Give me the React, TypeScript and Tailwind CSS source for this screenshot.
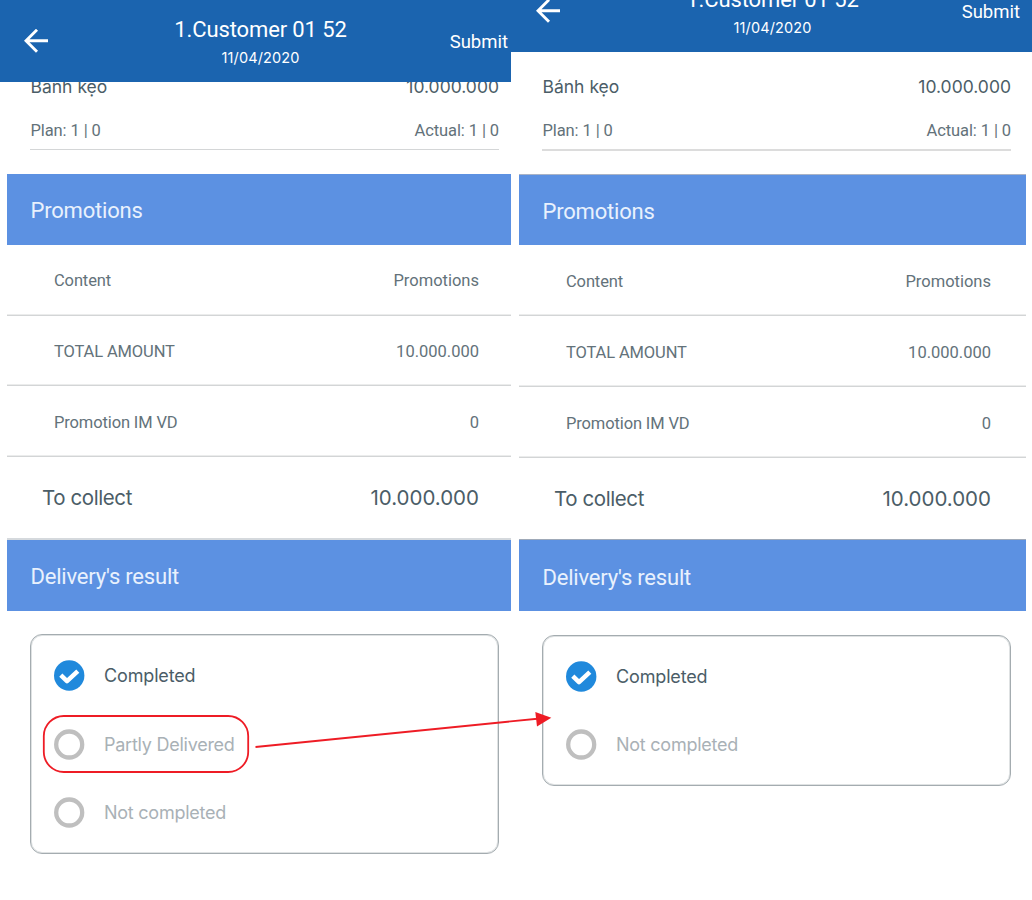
import React from 'react';

type Amount = { label: string; value: string };

const rows: Amount[] = [
  { label: 'Content', value: 'Promotions' },
  { label: 'TOTAL AMOUNT', value: '10.000.000' },
  { label: 'Promotion IM VD', value: '0' },
];

function BackArrow() {
  return (
    <svg width="24" height="24" viewBox="0 0 24 24" fill="none" stroke="#fff" strokeWidth="2.9">
      <path d="M24 11.700H2.500M13 .8 2 11.700l11 11" />
    </svg>
  );
}

function Header() {
  return (
    <div className="flex h-[82px] items-start pl-6 pr-[3px] text-white">
      <div className="w-[120px] pt-[29px]">
        <BackArrow />
      </div>
      <div className="flex w-[233px] flex-col items-center pt-4">
        <div className="h-7 whitespace-nowrap text-[22px] leading-7 tracking-[-0.12px]">1.Customer 01 52</div>
        <div className="h-7 font-[Inter] text-[14.5px] leading-7 tracking-[0.12px]">11/04/2020</div>
      </div>
      <div className="flex-1 pt-7 text-right text-[18.5px] leading-7">Submit</div>
    </div>
  );
}

function Band({ title, wide }: { title: string; wide?: boolean }) {
  return (
    <div
      className={
        wide
          ? 'flex h-[71px] items-center bg-[#5c91e2] pl-[23.5px] pt-[3px] text-[22px] tracking-[-0.2px] text-[#e9f1fd]'
          : 'flex h-[71px] items-center bg-[#5c91e2] pl-[23.5px] pt-[2px] text-[22px] tracking-[-0.2px] text-[#e9f1fd]'
      }
    >
      {title}
    </div>
  );
}

function Option({ label, checked }: { label: string; checked?: boolean }) {
  return (
    <div className="flex h-[68.4px] items-center">
      <svg width="31" height="31" viewBox="0 0 31 31">
        {checked ? (
          <>
            <circle cx="15.2" cy="15.500" r="15.2" fill="#2089dc" />
            <path
              d="m6.800 15.200 6.200 6L23.800 11.200"
              fill="none"
              stroke="#fff"
              strokeWidth="4.500"
              strokeLinejoin="round"
            />
          </>
        ) : (
          <circle cx="15.2" cy="15.500" r="13" fill="none" stroke="#bfbfbf" strokeWidth="4.300" />
        )}
      </svg>
      <span
        className={
          checked
            ? 'ml-[19px] font-[Inter] text-[18px] tracking-[-0.15px] text-[#4b5d67]'
            : 'ml-[19px] font-[Inter] text-[18px] tracking-[-0.25px] text-[#a9b1b6]'
        }
      >
        {label}
      </span>
    </div>
  );
}

function Details({ options, wide }: { options: string[]; wide?: boolean }) {
  return (
    <div className={wide ? 'w-[514px] pl-[7px] pr-0' : 'w-[511px] pl-[7px]'}>
      <div className={wide ? 'ml-[23px] mr-[15px] h-[77px] border-b-2 border-[#dcdcdc]' : 'ml-[23px] mr-3 h-[76px] border-b border-[#d4d6d7]'}>
        <div className="flex h-6 items-center justify-between pl-[0.5px] pt-[2px] font-[Inter] text-[17.5px] text-[#4b5d67]">
          <span>Bánh kẹo</span>
          <span>10.000.000</span>
        </div>
        <div className="mt-5 flex h-6 items-center justify-between pl-[0.5px] pt-[2px] text-[16.5px] tracking-[-0.1px] text-[#63727a]">
          <span>Plan: 1 | 0</span>
          <span>Actual: 1 | 0</span>
        </div>
      </div>
      <div className={wide ? 'h-6 border-b border-[#a9b3c6]' : 'h-6'} />
      <div className={wide ? '[&>div]:h-[70px]' : ''}>
        <Band title="Promotions" wide={wide} />
      </div>
      {rows.map((r) => (
        <div
          key={r.label}
          className={
            wide
              ? 'flex h-[71px] items-center justify-between border-b border-[#d3d5d6] pl-[47px] pr-[35px] pt-[4px] text-[16.5px] text-[#63727a] shadow-[inset_0_-1px_0_#ebecec]'
              : 'flex h-[70.7px] items-center justify-between border-b border-[#d3d5d6] pl-[47px] pr-8 pt-[4px] text-[16.5px] text-[#63727a] shadow-[inset_0_-1px_0_#ebecec]'
          }
        >
          <span className="tracking-[-0.13px]">{r.label}</span>
          <span>{r.value}</span>
        </div>
      ))}
      <div
        className={
          wide
            ? 'flex h-[82px] items-center justify-between border-b border-[#9fa9b8] pl-[35px] pr-[35px] pt-px font-[Inter] text-[20.5px] text-[#4b5d67]'
            : 'flex h-[82.9px] items-center justify-between border-b-2 border-[#d5d9dd] pl-[35px] pr-8 pt-[2px] font-[Inter] text-[20.5px] text-[#4b5d67]'
        }
      >
        <span className="tracking-[-0.4px]">To collect</span>
        <span>10.000.000</span>
      </div>
      <Band title="Delivery's result" wide={wide} />
      <div
        className={
          wide
            ? 'ml-[23px] mr-[15px] mt-6 rounded-xl border border-[#a4acb0] px-[23px] pb-[6px] pt-[6px] shadow-[inset_0_0_0_1px_#dfe2e3]'
            : 'ml-[23px] mr-3 mt-[23px] rounded-xl border border-[#a4acb0] px-[23px] pb-[6px] pt-[6.5px] shadow-[inset_0_0_0_1px_#dfe2e3]'
        }
      >
        {options.map((o, i) => (
          <Option key={o} label={o} checked={i === 0} />
        ))}
      </div>
    </div>
  );
}

export default function App() {
  return (
    <div className="relative flex h-[900px] w-[1032px] overflow-hidden bg-white font-[Roboto]">
      <div className="w-[511px] shrink-0">
        <div className="relative z-10 h-[82px] bg-[#1b64af]">
          <Header />
        </div>
        <div className="-mt-2">
          <Details options={['Completed', 'Partly Delivered', 'Not completed']} />
        </div>
      </div>
      <div className="w-[521px] shrink-0">
        <div className="flex h-[52px] flex-col justify-end overflow-hidden bg-[#1b64af]">
          <div className="ml-px w-[511px] shrink-0">
            <Header />
          </div>
        </div>
        <div className="ml-px pt-[22px]">
          <Details wide options={['Completed', 'Not completed']} />
        </div>
      </div>
      <svg className="pointer-events-none absolute inset-0 z-20" width="1032" height="900" viewBox="0 0 1032 900">
        <rect x="43.8" y="716" width="204.4" height="56" rx="20" fill="none" stroke="#ee1c25" strokeWidth="1.8" />
        <path d="M255.500 747 540 718.500" stroke="#ee1c25" strokeWidth="1.8" />
        <path d="M535.300 712 551.300 717.800 537 726.500z" fill="#ee1c25" />
      </svg>
    </div>
  );
}
